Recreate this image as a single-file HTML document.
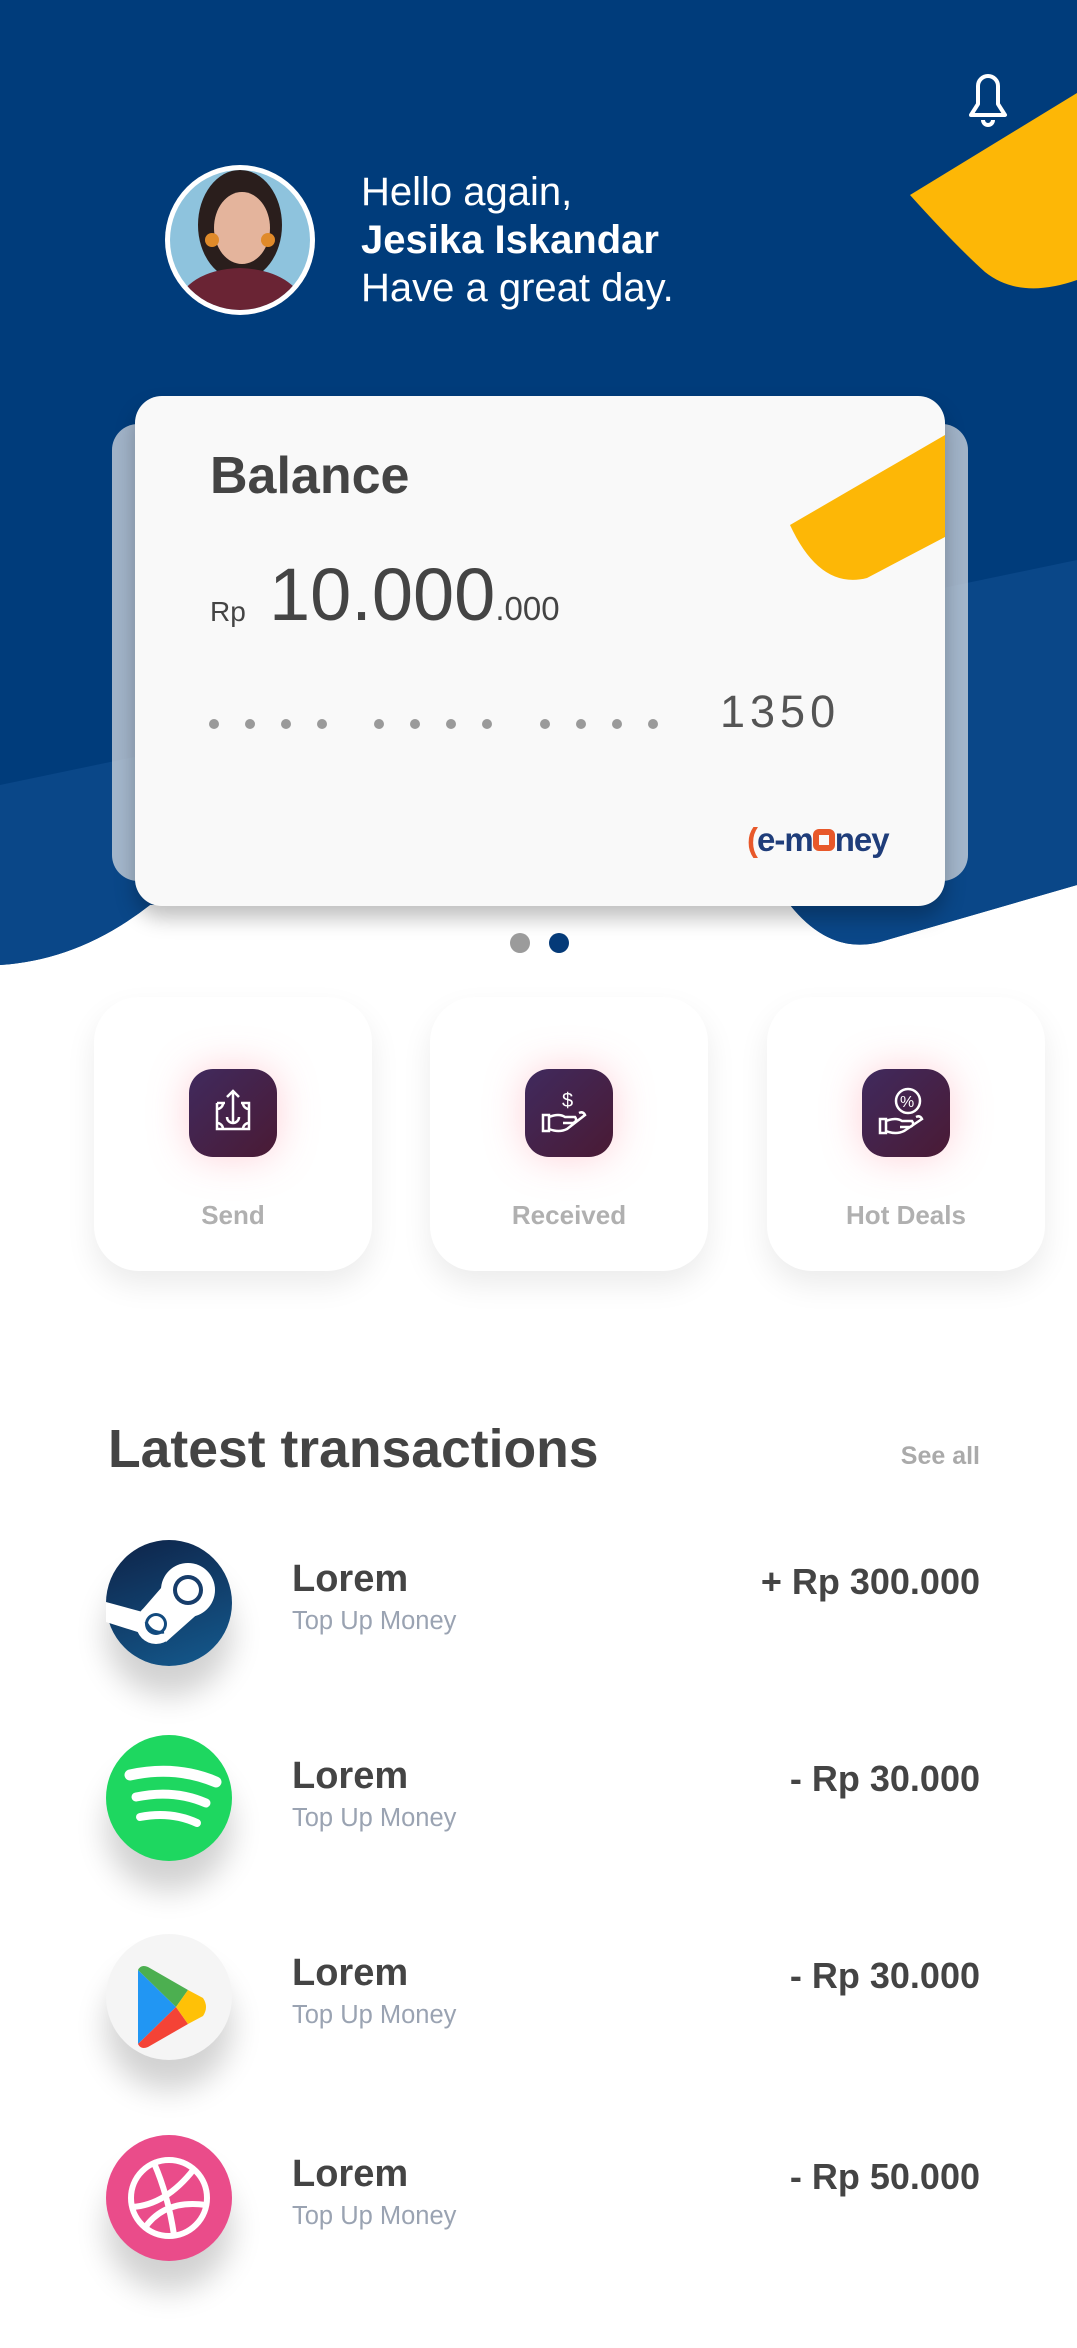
<!DOCTYPE html>
<html><head><meta charset="utf-8"><style>
*{margin:0;padding:0;box-sizing:border-box}
body{width:1077px;height:2348px;background:#fff;font-family:"Liberation Sans",sans-serif;position:relative;overflow:hidden}
.a{position:absolute}
.hello{left:361px;color:#fff;font-size:40px;line-height:48px;top:168px}
.card{left:135px;top:396px;width:810px;height:510px;background:#f9f9f9;border-radius:27px;box-shadow:0 12px 20px rgba(0,0,0,.25);overflow:hidden}
.back{left:112px;top:424px;width:856px;height:457px;border-radius:26px;background:rgba(215,219,226,.75)}
.dot{width:10px;height:10px;border-radius:50%;background:#9a9a9a;top:719px}
.act{top:997px;width:278px;height:274px;background:#fff;border-radius:45px;box-shadow:0 14px 30px rgba(0,0,0,.08)}
.ib{position:absolute;left:95px;top:72px;width:88px;height:88px;border-radius:24px;background:linear-gradient(135deg,#402a5e,#4a1a34);box-shadow:0 0 40px rgba(255,120,140,.35)}
.lbl{position:absolute;width:100%;text-align:center;top:203px;font-size:26px;font-weight:bold;color:#b0b0b0}
.ic{left:106px;width:126px;height:126px;border-radius:50%;box-shadow:0 30px 30px rgba(0,0,0,.18)}
.t{left:292px;font-size:38px;font-weight:bold;color:#444}
.s{left:292px;font-size:25.5px;color:#9aa3b2}
.m{right:97px;font-size:36px;font-weight:bold;color:#444}
</style></head><body>
<svg class="a" style="left:0;top:0" width="1077" height="980">
<rect width="1077" height="980" fill="#fff"/>
<path d="M0,0H1077V885L880,942Q830,955 790,905H150Q80,960 0,965Z" fill="#003c7b"/>
<path d="M0,785L1077,560V885L880,942Q830,955 790,905H150Q80,960 0,965Z" fill="#0a4788"/>
<path d="M910,195L1077,93V280Q1020,300 985,272Q955,245 910,195Z" fill="#fdb706"/>
<path d="M978,86a10,10 0 0 1 20,0v18l7,11h-34l7,-11z" fill="none" stroke="#fff" stroke-width="4" stroke-linejoin="round"/>
<path d="M983,120a5,5 0 0 0 10,0" fill="none" stroke="#fff" stroke-width="4"/>
<circle cx="240" cy="240" r="75" fill="#fff"/>
<clipPath id="av"><circle cx="240" cy="240" r="70"/></clipPath>
<g clip-path="url(#av)"><rect x="160" y="160" width="160" height="160" fill="#8ec3dd"/>
<ellipse cx="240" cy="225" rx="42" ry="55" fill="#2a1e1c"/>
<ellipse cx="242" cy="228" rx="28" ry="36" fill="#e4b49c"/>
<path d="M170,320Q180,270 240,268Q300,270 312,320Z" fill="#6a2434"/>
<circle cx="268" cy="240" r="7" fill="#e08a2a"/><circle cx="212" cy="240" r="7" fill="#e08a2a"/></g>
</svg>
<div class="a hello">Hello again,<br><b>Jesika Iskandar</b><br>Have a great day.</div>
<div class="a back"></div>
<div class="a card">
<svg class="a" style="left:0;top:0" width="810" height="510"><path d="M655,129L810,39V141L732,182Q685,194 655,129Z" fill="#fdb706"/></svg>
<div class="a" style="left:75px;top:50px;font-size:52px;font-weight:bold;color:#444">Balance</div>
<div class="a" style="left:75px;top:200px;font-size:28px;color:#444">Rp</div>
<div class="a" style="left:134px;top:156px;font-size:74px;color:#444">10.000<span style="font-size:33px">.000</span></div>
<div class="a" style="left:585px;top:290px;font-size:45px;color:#555;letter-spacing:5px">1350</div>
<div class="a" style="left:612px;top:425px;font-size:33px;font-weight:bold;color:#1f3d7a;letter-spacing:-1px"><span style="color:#e8582a">(</span>e-m<span style="display:inline-block;width:22px;height:22px;border:6px solid #e8582a;border-radius:6px"></span>ney</div>
</div>
<div class="a dot" style="left:209px"></div><div class="a dot" style="left:245px"></div><div class="a dot" style="left:281px"></div><div class="a dot" style="left:317px"></div>
<div class="a dot" style="left:374px"></div><div class="a dot" style="left:410px"></div><div class="a dot" style="left:446px"></div><div class="a dot" style="left:482px"></div>
<div class="a dot" style="left:540px"></div><div class="a dot" style="left:576px"></div><div class="a dot" style="left:612px"></div><div class="a dot" style="left:648px"></div>
<div class="a" style="left:510px;top:933px;width:20px;height:20px;border-radius:50%;background:#9b9b9b"></div>
<div class="a" style="left:549px;top:933px;width:20px;height:20px;border-radius:50%;background:#043a78"></div>
<div class="a act" style="left:94px"><div class="ib"><svg width="88" height="88"><g fill="none" stroke="#fff" stroke-width="2.5"><path d="M28,34h8M52,34h8V60H28V34M28,40a6,6 0 0 0 6,-6M60,40a6,6 0 0 1 -6,-6M28,54a6,6 0 0 1 6,6M60,54a6,6 0 0 0 -6,6"/><path d="M44,22V54M38,28l6,-6 6,6M38,48a6,6 0 0 0 12,0"/></g></svg></div><div class="lbl">Send</div></div>
<div class="a act" style="left:430px"><div class="ib"><svg width="88" height="88"><g fill="none" stroke="#fff" stroke-width="2.5"><text x="37" y="38" font-size="20" fill="#fff" stroke="none" font-family="Liberation Sans">$</text><path d="M18,46h6v16h-6zM24,48q10,-4 16,0h10q3,4 -2,6h-10M24,60q10,4 18,0l18,-14q-2,-4 -6,-2"/></g></svg></div><div class="lbl">Received</div></div>
<div class="a act" style="left:767px"><div class="ib"><svg width="88" height="88"><g fill="none" stroke="#fff" stroke-width="2.5"><circle cx="46" cy="32" r="12"/><text x="38" y="38" font-size="16" fill="#fff" stroke="none" font-family="Liberation Sans">%</text><path d="M18,50h6v14h-6zM24,52q10,-4 16,0h10q3,4 -2,6h-10M24,62q10,4 18,0l18,-12q-2,-4 -6,-2"/></g></svg></div><div class="lbl">Hot Deals</div></div>
<div class="a" style="left:108px;top:1419px;font-size:53.5px;font-weight:bold;color:#444">Latest transactions</div>
<div class="a" style="right:97px;top:1442px;font-size:25px;font-weight:bold;color:#aaa">See all</div>

<div class="a ic" style="top:1540px;background:linear-gradient(160deg,#0e2348,#145a8e)"><svg width="126" height="126"><g fill="#fff"><circle cx="82" cy="50" r="27"/><circle cx="50" cy="84" r="20"/><path d="M62,40L96,70L60,102L36,70Z"/><path d="M0,62L44,74L38,94L0,82Z"/></g><circle cx="82" cy="50" r="15" fill="#173d6a"/><circle cx="82" cy="50" r="11" fill="#fff"/><circle cx="50" cy="84" r="11" fill="#124a7e"/><circle cx="50" cy="84" r="8" fill="#fff"/><path d="M40,82Q45,94 58,92" stroke="#124a7e" stroke-width="3" fill="none"/></svg></div>
<div class="a t" style="top:1558px">Lorem</div><div class="a s" style="top:1607px">Top Up Money</div><div class="a m" style="top:1561px">+ Rp 300.000</div>

<div class="a ic" style="top:1735px;background:#1ed760"><svg width="126" height="126"><g fill="none" stroke="#fff" stroke-linecap="round"><path d="M24,40Q70,30 110,47" stroke-width="11"/><path d="M30,62Q68,54 100,68" stroke-width="9"/><path d="M34,82Q65,76 91,88" stroke-width="8"/></g></svg></div>
<div class="a t" style="top:1755px">Lorem</div><div class="a s" style="top:1804px">Top Up Money</div><div class="a m" style="top:1758px">- Rp 30.000</div>

<div class="a ic" style="top:1934px;background:#f5f5f5"><svg width="126" height="126"><path d="M32,36L70,73L32,110Z" fill="#2196f3"/><path d="M32,36Q35,30 42,33L82,56L70,73Z" fill="#4caf50"/><path d="M32,110Q35,116 42,113L82,90L70,73Z" fill="#f44336"/><path d="M82,56L97,64Q103,73 97,82L82,90L70,73Z" fill="#ffc107"/></svg></div>
<div class="a t" style="top:1952px">Lorem</div><div class="a s" style="top:2001px">Top Up Money</div><div class="a m" style="top:1955px">- Rp 30.000</div>

<div class="a ic" style="top:2135px;background:#ea4c8a"><svg width="126" height="126"><g fill="none" stroke="#fff" stroke-width="6"><circle cx="63" cy="63" r="38"/><path d="M48,28Q62,60 68,100M26,72Q60,70 88,34M38,94Q58,64 100,70"/></g></svg></div>
<div class="a t" style="top:2153px">Lorem</div><div class="a s" style="top:2202px">Top Up Money</div><div class="a m" style="top:2156px">- Rp 50.000</div>
</body></html>
